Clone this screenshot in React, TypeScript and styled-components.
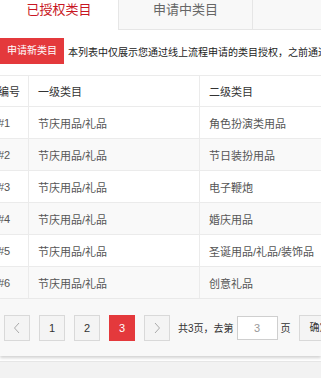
import styled, { createGlobalStyle } from 'styled-components';

const GlobalStyle = createGlobalStyle`
    html, body {
        margin: 0;
        padding: 0;
        background: #f2f2f2;
        overflow: hidden;
    }
    body {
        font-family: "Liberation Sans", "Noto Sans CJK SC", sans-serif;
        color: #333;
    }
`

const Page = styled.div`
    width: 321px;
    height: 378px;
    overflow: hidden;
    background: #fff;
    display: flex;
    flex-direction: column;
`

const TabBar = styled.div`
    display: flex;
    height: 29px;
    border-bottom: 1px solid #e6e6e6;
    background: #f8f8f8;
    flex-shrink: 0;
`

const Tab = styled.div<{ $active?: boolean; $width: number }>`
    width: ${p => p.$width}px;
    box-sizing: border-box;
    line-height: 19px;
    text-align: center;
    font-size: 13px;
    color: ${p => (p.$active ? '#c81623' : '#666')};
    background: ${p => (p.$active ? '#fff' : '#f8f8f8')};
    border-right: 1px solid #e6e6e6;
    margin-bottom: ${p => (p.$active ? '-1px' : '0')};
    height: ${p => (p.$active ? '30px' : '29px')};
`

const Toolbar = styled.div`
    display: flex;
    align-items: center;
    gap: 4px;
    padding-top: 8px;
    height: 26px;
    white-space: nowrap;
`

const RedButton = styled.div`
    width: 64px;
    height: 26px;
    flex-shrink: 0;
    background: #e4393c;
    color: #fff;
    font-size: 10px;
    line-height: 26px;
    text-align: center;
`

const Note = styled.span`
    font-size: 10px;
    color: #222;
`

const TableWrap = styled.div`
    margin-top: 11px;
    overflow: hidden;
`

const Table = styled.table`
    border-collapse: collapse;
    margin-left: -12px;
    width: 480px;
    table-layout: fixed;
    font-size: 11px;

    th, td {
        border: 1px solid #ebebeb;
        text-align: left;
        padding: 0 9px;
        white-space: nowrap;
        overflow: hidden;
    }

    th {
        height: 30px;
        font-weight: normal;
        color: #333;
        background: #fff;
    }

    td {
        height: 31px;
        color: #555;
    }

    tbody tr:nth-child(even) td {
        background: #f9f9f9;
    }
`

const Pager = styled.div`
    display: flex;
    align-items: center;
    height: 57px;
    padding: 0 0 0 4px;
    background: #f8f8f8;
    box-shadow: 0 2px 3px rgba(0, 0, 0, 0.18);
    position: relative;
    white-space: nowrap;
    overflow: hidden;
    font-size: 11px;
    flex-shrink: 0;

    & > * {
        flex-shrink: 0;
    }
`

const PageButton = styled.div<{ $active?: boolean }>`
    width: 26px;
    height: 26px;
    box-sizing: border-box;
    margin-right: 9px;
    border: 1px solid ${p => (p.$active ? '#e4393c' : '#d9d9d9')};
    background: ${p => (p.$active ? '#e4393c' : '#f4f4f4')};
    color: ${p => (p.$active ? '#fff' : '#333')};
    display: flex;
    align-items: center;
    justify-content: center;
    font-size: 11px;
`

const PagerText = styled.span`
    color: #333;
    font-size: 10px;
    margin-left: -1px;
`

const PageInput = styled.div`
    width: 41px;
    height: 24px;
    box-sizing: border-box;
    margin: 0 4px 0 3px;
    border: 1px solid #cfcfcf;
    background: #fff;
    color: #999;
    display: flex;
    align-items: center;
    justify-content: center;
    font-size: 11px;
`

const ConfirmButton = styled.div`
    width: 40px;
    height: 26px;
    box-sizing: border-box;
    margin-left: 8px;
    border: 1px solid #d9d9d9;
    background: #f4f4f4;
    color: #333;
    font-size: 10px;
    line-height: 24px;
    padding-left: 10px;
`

const Footer = styled.div`
    flex: 1;
    margin-top: 5px;
    border-top: 1px solid #e6e6e6;
    background: #f2f2f2;
`

const Chevron = ({ dir }: { dir: 'left' | 'right' }) => (
    <svg width="8" height="12" viewBox="0 0 8 12">
        <polyline
            points={dir === 'left' ? '6,1 1.5,6 6,11' : '2,1 6.5,6 2,11'}
            fill="none"
            stroke="#aaa"
            strokeWidth="1"
        />
    </svg>
);

const rows = [
    ['#1', '节庆用品/礼品', '角色扮演类用品'],
    ['#2', '节庆用品/礼品', '节日装扮用品'],
    ['#3', '节庆用品/礼品', '电子鞭炮'],
    ['#4', '节庆用品/礼品', '婚庆用品'],
    ['#5', '节庆用品/礼品', '圣诞用品/礼品/装饰品'],
    ['#6', '节庆用品/礼品', '创意礼品'],
];

export default function App() {
    return <>
        <GlobalStyle />
        <Page>
            <TabBar>
                <Tab $active $width={119}>已授权类目</Tab>
                <Tab $width={134}>申请中类目</Tab>
            </TabBar>
            <Toolbar>
                <RedButton>申请新类目</RedButton>
                <Note>本列表中仅展示您通过线上流程申请的类目授权，之前通过线下申请的类目授权请联系客服查询</Note>
            </Toolbar>
            <TableWrap>
                <Table>
                    <colgroup>
                        <col style={{ width: 40 }} />
                        <col style={{ width: 171 }} />
                        <col />
                    </colgroup>
                    <thead>
                        <tr><th>编号</th><th>一级类目</th><th>二级类目</th></tr>
                    </thead>
                    <tbody>
                        {rows.map(r => (
                            <tr key={r[0]}><td>{r[0]}</td><td>{r[1]}</td><td>{r[2]}</td></tr>
                        ))}
                    </tbody>
                </Table>
            </TableWrap>
            <Pager>
                <PageButton><Chevron dir="left" /></PageButton>
                <PageButton>1</PageButton>
                <PageButton>2</PageButton>
                <PageButton $active>3</PageButton>
                <PageButton><Chevron dir="right" /></PageButton>
                <PagerText>共3页，去第</PagerText>
                <PageInput>3</PageInput>
                <PagerText>页</PagerText>
                <ConfirmButton>确定</ConfirmButton>
            </Pager>
            <Footer />
        </Page>
    </>
}
